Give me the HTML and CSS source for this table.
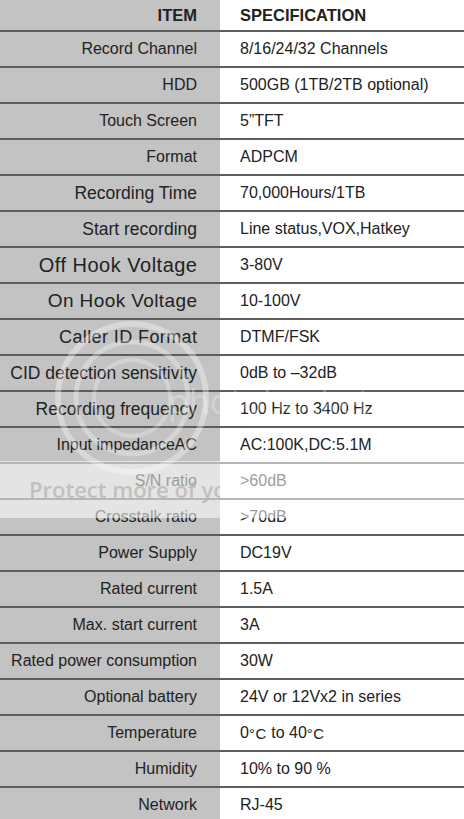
FILE: index.html
```html
<!DOCTYPE html>
<html>
<head>
<meta charset="utf-8">
<link rel="stylesheet" href="styles.css">
</head>
<body>
<div class="sheet">
  <div class="row head"><div class="item">ITEM</div><div class="spec">SPECIFICATION</div></div>
  <div class="row"><div class="item">Record Channel</div><div class="spec">8/16/24/32 Channels</div></div>
  <div class="row"><div class="item">HDD</div><div class="spec">500GB (1TB/2TB optional)</div></div>
  <div class="row"><div class="item">Touch Screen</div><div class="spec">5”TFT</div></div>
  <div class="row"><div class="item">Format</div><div class="spec">ADPCM</div></div>
  <div class="row"><div class="item big">Recording Time</div><div class="spec">70,000Hours/1TB</div></div>
  <div class="row"><div class="item big">Start recording</div><div class="spec">Line status,VOX,Hatkey</div></div>
  <div class="row"><div class="item off">Off Hook Voltage</div><div class="spec">3-80V</div></div>
  <div class="row"><div class="item on">On Hook Voltage</div><div class="spec">10-100V</div></div>
  <div class="row"><div class="item caller">Caller ID Format</div><div class="spec">DTMF/FSK</div></div>
  <div class="row"><div class="item big">CID detection sensitivity</div><div class="spec">0dB to –32dB</div></div>
  <div class="row"><div class="item big">Recording frequency</div><div class="spec">100 Hz to 3400 Hz</div></div>
  <div class="row"><div class="item">Input impedanceAC</div><div class="spec">AC:100K,DC:5.1M</div></div>
  <div class="row"><div class="item">S/N ratio</div><div class="spec">&gt;60dB</div></div>
  <div class="row"><div class="item">Crosstalk ratio</div><div class="spec">&gt;70dB</div></div>
  <div class="row"><div class="item">Power Supply</div><div class="spec">DC19V</div></div>
  <div class="row"><div class="item">Rated current</div><div class="spec">1.5A</div></div>
  <div class="row"><div class="item">Max. start current</div><div class="spec">3A</div></div>
  <div class="row"><div class="item">Rated power consumption</div><div class="spec">30W</div></div>
  <div class="row"><div class="item">Optional battery</div><div class="spec">24V or 12Vx2 in series</div></div>
  <div class="row"><div class="item">Temperature</div><div class="spec">0<span class="deg">°C</span>&nbsp;to 40<span class="deg">°C</span></div></div>
  <div class="row"><div class="item">Humidity</div><div class="spec">10% to 90 %</div></div>
  <div class="row"><div class="item">Network</div><div class="spec">RJ-45</div></div>

  <div class="wm-logo">
    <svg width="160" height="160" viewBox="0 0 160 160">
      <circle cx="80" cy="80" r="74" fill="none" stroke="#fff" stroke-opacity="0.35" stroke-width="6"/>
      <circle cx="80" cy="80" r="56" fill="none" stroke="#fff" stroke-opacity="0.3" stroke-width="5"/>
      <circle cx="80" cy="80" r="38" fill="none" stroke="#fff" stroke-opacity="0.25" stroke-width="4"/>
    </svg>
  </div>
  <div class="wm-word">photobucket</div>
  <div class="wm-band"><div class="wm-text">Protect more of your memories for less!</div></div>
</div>
</body>
</html>
```
FILE: styles.css
```css
html, body {
  margin: 0;
  padding: 0;
  background: #ffffff;
}
.sheet {
  position: relative;
  width: 464px;
  height: 819px;
  overflow: hidden;
  font-family: "Liberation Sans", Arial, sans-serif;
  color: #222222;
  background: linear-gradient(to right, #c3c3c3 0, #c3c3c3 220px, #ffffff 220px);
}
.row {
  display: grid;
  grid-template-columns: 220px 1fr;
  height: 34px;
  border-bottom: 2px solid #5e5e5e;
  font-size: 16px;
}
.row.head {
  height: 30px;
  font-weight: bold;
  font-size: 16.5px;
}
.item {
  display: flex;
  align-items: center;
  justify-content: flex-end;
  padding-right: 23px;
  white-space: nowrap;
}
.item.big {
  font-size: 17.5px;
}
.item.off {
  font-size: 20px;
  letter-spacing: 0.5px;
  padding-right: 22.5px;
}
.item.on {
  font-size: 19px;
  letter-spacing: 0.4px;
  padding-right: 22.6px;
}
.item.caller {
  font-size: 18px;
  letter-spacing: 0.4px;
  padding-right: 22.6px;
}
.spec {
  display: flex;
  align-items: center;
  padding-left: 20px;
  white-space: nowrap;
}
.deg {
  font-size: 15px;
  letter-spacing: 0.5px;
}
.wm-logo {
  position: absolute;
  left: 52px;
  top: 318px;
  width: 160px;
  height: 160px;
}
.wm-word {
  position: absolute;
  left: 168px;
  top: 378px;
  font-family: "Open Sans", sans-serif;
  font-size: 34px;
  color: rgba(255, 255, 255, 0.3);
  white-space: nowrap;
}
.wm-band {
  position: absolute;
  left: 0;
  top: 461px;
  width: 464px;
  height: 57px;
  background: rgba(255, 255, 255, 0.55);
}
.wm-text {
  width: 220px;
  overflow: hidden;
  white-space: nowrap;
  padding-left: 29px;
  box-sizing: border-box;
  margin-top: 13px;
  font-family: "Open Sans", sans-serif;
  font-size: 22px;
  font-weight: 600;
  color: rgba(180, 180, 180, 0.75);
  line-height: 30px;
}
```
